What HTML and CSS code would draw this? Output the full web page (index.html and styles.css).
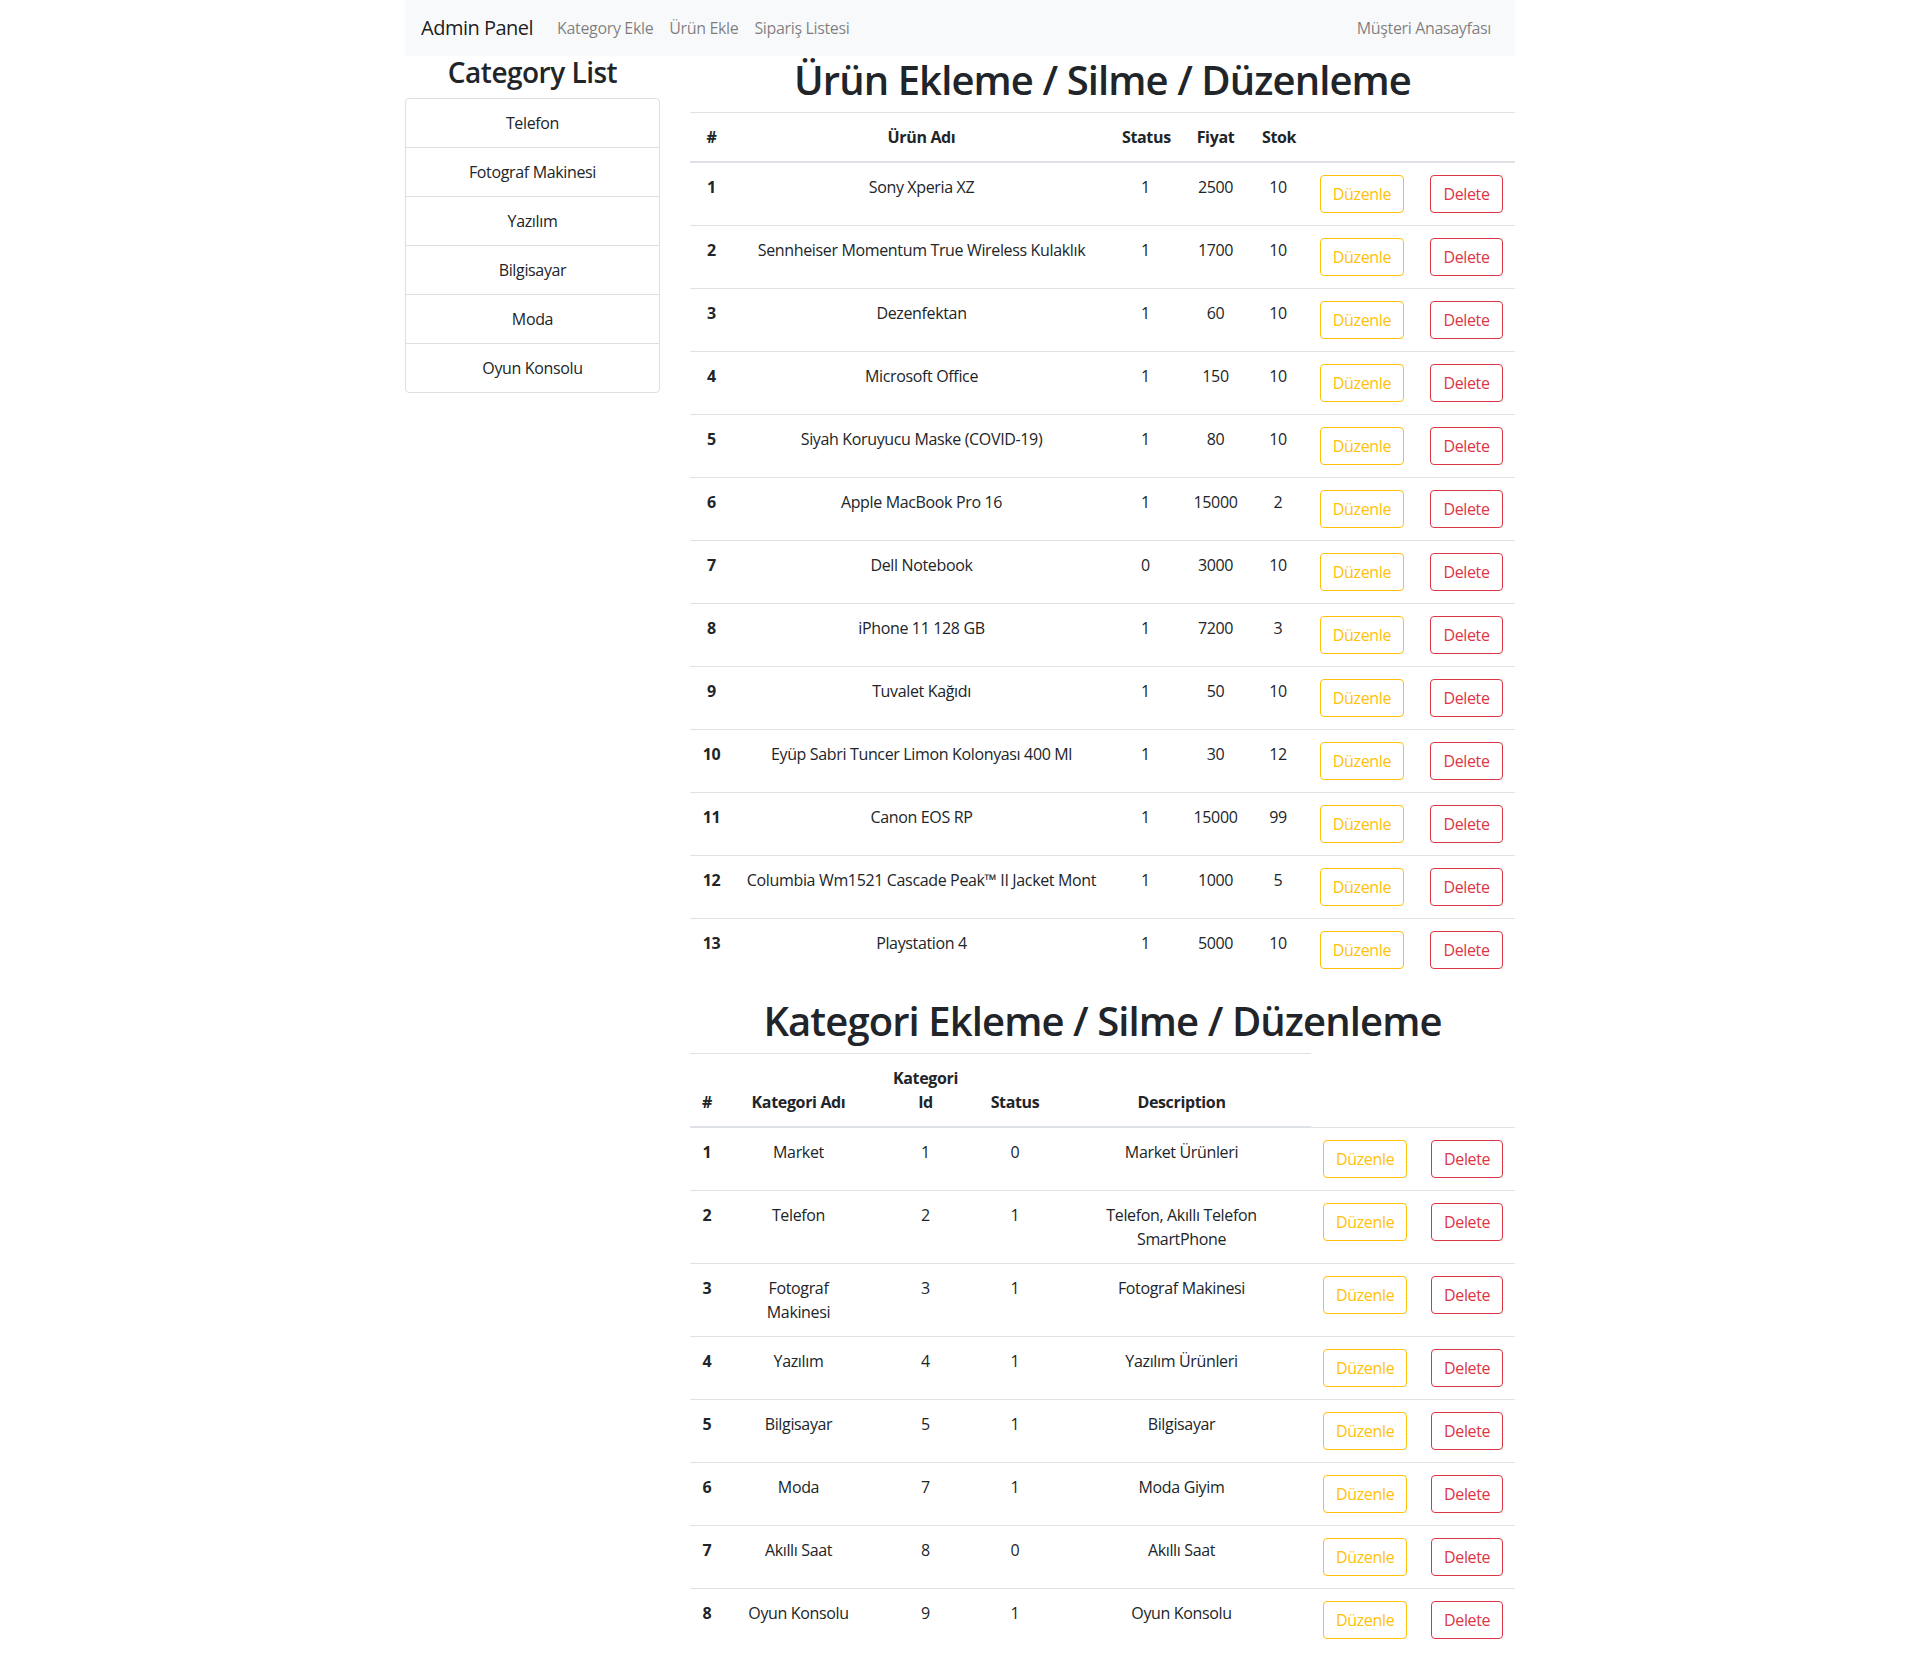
FILE: index.html
```html
<!DOCTYPE html>
<html lang="tr">
<head>
<meta charset="utf-8">
<title>Admin Panel</title>
<link rel="stylesheet" href="styles.css">
</head>
<body>
<div class="container">
  <nav class="navbar">
    <a class="brand" href="#">Admin Panel</a>
    <ul class="nav-list">
      <li><a class="nav-link" href="#">Kategory Ekle</a></li>
      <li><a class="nav-link" href="#">Ürün Ekle</a></li>
      <li><a class="nav-link" href="#">Sipariş Listesi</a></li>
    </ul>
    <ul class="nav-list nav-right">
      <li><a class="nav-link" href="#">Müşteri Anasayfası</a></li>
    </ul>
  </nav>
  <div class="row">
    <aside class="col-side">
      <h3 class="side-title">Category List</h3>
      <ul class="list-group">
        <li class="list-item">Telefon</li>
        <li class="list-item">Fotograf Makinesi</li>
        <li class="list-item">Yazılım</li>
        <li class="list-item">Bilgisayar</li>
        <li class="list-item">Moda</li>
        <li class="list-item">Oyun Konsolu</li>
      </ul>
    </aside>
    <main class="col-main">
      <h1 class="page-title">Ürün Ekleme / Silme / Düzenleme</h1>
      <table class="table products">
        <colgroup>
          <col class="p-id"><col class="p-name"><col class="p-status"><col class="p-price"><col class="p-stock"><col class="p-edit"><col class="p-del">
        </colgroup>
        <thead>
          <tr><th>#</th><th>Ürün Adı</th><th>Status</th><th>Fiyat</th><th>Stok</th><th></th><th></th></tr>
        </thead>
        <tbody>
          <tr><th>1</th><td class="name">Sony Xperia XZ</td><td>1</td><td>2500</td><td>10</td><td><a class="btn btn-warning" href="#">Düzenle</a></td><td><a class="btn btn-danger" href="#">Delete</a></td></tr>
          <tr><th>2</th><td class="name">Sennheiser Momentum True Wireless Kulaklık</td><td>1</td><td>1700</td><td>10</td><td><a class="btn btn-warning" href="#">Düzenle</a></td><td><a class="btn btn-danger" href="#">Delete</a></td></tr>
          <tr><th>3</th><td class="name">Dezenfektan</td><td>1</td><td>60</td><td>10</td><td><a class="btn btn-warning" href="#">Düzenle</a></td><td><a class="btn btn-danger" href="#">Delete</a></td></tr>
          <tr><th>4</th><td class="name">Microsoft Office</td><td>1</td><td>150</td><td>10</td><td><a class="btn btn-warning" href="#">Düzenle</a></td><td><a class="btn btn-danger" href="#">Delete</a></td></tr>
          <tr><th>5</th><td class="name">Siyah Koruyucu Maske (COVID-19)</td><td>1</td><td>80</td><td>10</td><td><a class="btn btn-warning" href="#">Düzenle</a></td><td><a class="btn btn-danger" href="#">Delete</a></td></tr>
          <tr><th>6</th><td class="name">Apple MacBook Pro 16</td><td>1</td><td>15000</td><td>2</td><td><a class="btn btn-warning" href="#">Düzenle</a></td><td><a class="btn btn-danger" href="#">Delete</a></td></tr>
          <tr><th>7</th><td class="name">Dell Notebook</td><td>0</td><td>3000</td><td>10</td><td><a class="btn btn-warning" href="#">Düzenle</a></td><td><a class="btn btn-danger" href="#">Delete</a></td></tr>
          <tr><th>8</th><td class="name">iPhone 11 128 GB</td><td>1</td><td>7200</td><td>3</td><td><a class="btn btn-warning" href="#">Düzenle</a></td><td><a class="btn btn-danger" href="#">Delete</a></td></tr>
          <tr><th>9</th><td class="name">Tuvalet Kağıdı</td><td>1</td><td>50</td><td>10</td><td><a class="btn btn-warning" href="#">Düzenle</a></td><td><a class="btn btn-danger" href="#">Delete</a></td></tr>
          <tr><th>10</th><td class="name">Eyüp Sabri Tuncer Limon Kolonyası 400 Ml</td><td>1</td><td>30</td><td>12</td><td><a class="btn btn-warning" href="#">Düzenle</a></td><td><a class="btn btn-danger" href="#">Delete</a></td></tr>
          <tr><th>11</th><td class="name">Canon EOS RP</td><td>1</td><td>15000</td><td>99</td><td><a class="btn btn-warning" href="#">Düzenle</a></td><td><a class="btn btn-danger" href="#">Delete</a></td></tr>
          <tr><th>12</th><td class="name">Columbia Wm1521 Cascade Peak™ II Jacket Mont</td><td>1</td><td>1000</td><td>5</td><td><a class="btn btn-warning" href="#">Düzenle</a></td><td><a class="btn btn-danger" href="#">Delete</a></td></tr>
          <tr><th>13</th><td class="name">Playstation 4</td><td>1</td><td>5000</td><td>10</td><td><a class="btn btn-warning" href="#">Düzenle</a></td><td><a class="btn btn-danger" href="#">Delete</a></td></tr>
        </tbody>
      </table>

      <h1 class="page-title">Kategori Ekleme / Silme / Düzenleme</h1>
      <table class="table categories">
        <colgroup>
          <col class="k-id"><col class="k-name"><col class="k-cid"><col class="k-status"><col class="k-desc"><col class="k-edit"><col class="k-del">
        </colgroup>
        <thead>
          <tr><th>#</th><th>Kategori Adı</th><th>Kategori Id</th><th>Status</th><th>Description</th></tr>
        </thead>
        <tbody>
          <tr><th>1</th><td>Market</td><td>1</td><td>0</td><td>Market Ürünleri</td><td><a class="btn btn-warning" href="#">Düzenle</a></td><td><a class="btn btn-danger" href="#">Delete</a></td></tr>
          <tr><th>2</th><td>Telefon</td><td>2</td><td>1</td><td>Telefon, Akıllı Telefon SmartPhone</td><td><a class="btn btn-warning" href="#">Düzenle</a></td><td><a class="btn btn-danger" href="#">Delete</a></td></tr>
          <tr><th>3</th><td>Fotograf Makinesi</td><td>3</td><td>1</td><td>Fotograf Makinesi</td><td><a class="btn btn-warning" href="#">Düzenle</a></td><td><a class="btn btn-danger" href="#">Delete</a></td></tr>
          <tr><th>4</th><td>Yazılım</td><td>4</td><td>1</td><td>Yazılım Ürünleri</td><td><a class="btn btn-warning" href="#">Düzenle</a></td><td><a class="btn btn-danger" href="#">Delete</a></td></tr>
          <tr><th>5</th><td>Bilgisayar</td><td>5</td><td>1</td><td>Bilgisayar</td><td><a class="btn btn-warning" href="#">Düzenle</a></td><td><a class="btn btn-danger" href="#">Delete</a></td></tr>
          <tr><th>6</th><td>Moda</td><td>7</td><td>1</td><td>Moda Giyim</td><td><a class="btn btn-warning" href="#">Düzenle</a></td><td><a class="btn btn-danger" href="#">Delete</a></td></tr>
          <tr><th>7</th><td>Akıllı Saat</td><td>8</td><td>0</td><td>Akıllı Saat</td><td><a class="btn btn-warning" href="#">Düzenle</a></td><td><a class="btn btn-danger" href="#">Delete</a></td></tr>
          <tr><th>8</th><td>Oyun Konsolu</td><td>9</td><td>1</td><td>Oyun Konsolu</td><td><a class="btn btn-warning" href="#">Düzenle</a></td><td><a class="btn btn-danger" href="#">Delete</a></td></tr>
        </tbody>
      </table>
    </main>
  </div>
</div>
</body>
</html>
```

FILE: styles.css
```css
*, *::before, *::after { box-sizing: border-box; }

html, body {
  margin: 0;
  padding: 0;
  background: #fff;
}

body {
  font-family: "Open Sans", "Noto Sans", "Liberation Sans", sans-serif;
  font-size: 16px;
  line-height: 1.5;
  letter-spacing: -0.35px;
  color: #212529;
}

.container {
  max-width: 1140px;
  margin: 0 auto;
  padding: 0 15px;
}

/* navbar */
.navbar {
  display: flex;
  align-items: center;
  background: #f8f9fa;
  padding: 8px 16px;
  height: 56px;
}
.brand {
  font-size: 20px;
  line-height: 30px;
  padding: 5px 0;
  margin-right: 16px;
  letter-spacing: -0.5px;
  color: rgba(0, 0, 0, 0.9);
  text-decoration: none;
  white-space: nowrap;
}
.nav-list {
  display: flex;
  list-style: none;
  margin: 0;
  padding: 0;
}
.nav-right { margin-left: auto; }
.nav-link {
  display: block;
  padding: 8px;
  color: rgba(0, 0, 0, 0.5);
  text-decoration: none;
  white-space: nowrap;
}

/* layout */
.row {
  display: flex;
  margin: 0 -15px;
}
.col-side {
  flex: 0 0 25%;
  max-width: 25%;
  padding: 0 15px;
}
.col-main {
  flex: 0 0 75%;
  max-width: 75%;
  padding: 0 15px;
}

.side-title {
  margin: 0 0 8px;
  font-size: 28px;
  font-weight: 600;
  line-height: 1.2;
  letter-spacing: -0.5px;
  text-align: center;
}

.list-group {
  list-style: none;
  margin: 0;
  padding: 0;
  border: 1px solid rgba(0, 0, 0, 0.125);
  border-radius: 4px;
}
.list-item {
  padding: 12px 20px;
  text-align: center;
  border-top: 1px solid rgba(0, 0, 0, 0.125);
}
.list-item:first-child { border-top: 0; }

.page-title {
  margin: 0 0 8px;
  font-size: 40px;
  font-weight: 600;
  line-height: 48px;
  letter-spacing: -0.9px;
  text-align: center;
}

/* tables */
.table {
  width: 100%;
  margin-bottom: 16px;
  border-collapse: collapse;
  table-layout: fixed;
  text-align: center;
}
.table th,
.table td {
  padding: 12px;
  vertical-align: top;
  border-top: 1px solid #dee2e6;
}
.table th { font-weight: 700; }
.table thead th {
  vertical-align: bottom;
  border-bottom: 2px solid #dee2e6;
}
.table .name { white-space: nowrap; }

.p-id { width: 43px; }
.p-name { width: 377px; }
.p-status { width: 71px; }
.p-price { width: 69px; }
.p-stock { width: 56px; }
.p-edit { width: 112px; }
.p-del { width: 97px; }

.k-id { width: 34px; }
.k-name { width: 149px; }
.k-cid { width: 105px; }
.k-status { width: 74px; }
.k-desc { width: 259px; }
.k-edit { width: 108px; }
.k-del { width: 96px; }

/* buttons */
.btn {
  display: inline-block;
  padding: 6px 12px;
  font-size: 16px;
  line-height: 24px;
  border: 1px solid transparent;
  border-radius: 4px;
  text-decoration: none;
  white-space: nowrap;
}
.btn-warning {
  color: #ffc107;
  border-color: #ffc107;
}
.btn-danger {
  color: #dc3545;
  border-color: #dc3545;
}
```
